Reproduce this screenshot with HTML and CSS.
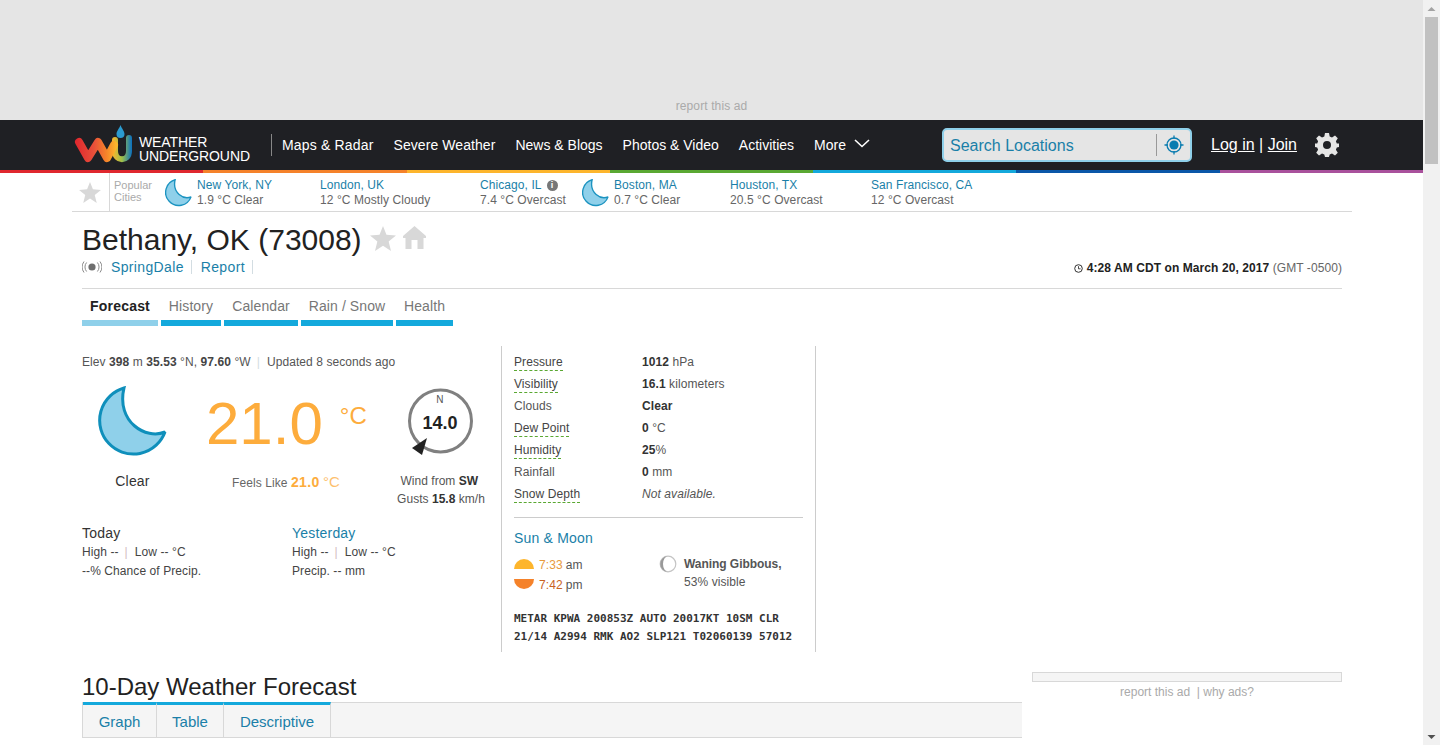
FILE: index.html
```html
<!DOCTYPE html>
<html lang="en">
<head>
    <meta charset="UTF-8">
    <title>Bethany, OK (73008) Forecast</title>
    <link rel="stylesheet" href="styles.css">
</head>
<body>
<div class="page">

    <!-- top ad -->
    <div class="top-ad"><span>report this ad</span></div>

    <!-- header -->
    <header class="site-header">
        <a class="logo">
            <svg width="60" height="44" viewBox="0 0 60 44">
                <defs>
                    <linearGradient id="wGrad" gradientUnits="userSpaceOnUse" x1="2" y1="0" x2="42" y2="0">
                        <stop offset="0" stop-color="#e0282e"/>
                        <stop offset="0.45" stop-color="#e8503a"/>
                        <stop offset="0.75" stop-color="#f5822a"/>
                        <stop offset="1" stop-color="#fdb52c"/>
                    </linearGradient>
                    <linearGradient id="uGrad" gradientUnits="userSpaceOnUse" x1="38" y1="0" x2="58" y2="0">
                        <stop offset="0" stop-color="#fdb52c"/>
                        <stop offset="0.5" stop-color="#9ec04a"/>
                        <stop offset="1" stop-color="#0a70c0"/>
                    </linearGradient>
                </defs>
                <path d="M41 17 V28 C41 39 55 39 55 28 V15" fill="none" stroke="url(#uGrad)" stroke-width="6" stroke-linecap="round"/>
                <path d="M5 19 L14 35 L24 19 L33 35 L40 22" fill="none" stroke="url(#wGrad)" stroke-width="8" stroke-linecap="round" stroke-linejoin="round"/>
                <path d="M46.5 2 C48 6 50.5 8 50.5 11 A4 4 0 0 1 42.5 11 C42.5 8 45 6 46.5 2 Z" fill="#2b9bd0"/>
            </svg>
            <span class="logo-text">WEATHER<br>UNDERGROUND</span>
        </a>
        <nav class="main-nav">
            <a class="maps">Maps &amp; Radar</a>
            <a class="severe">Severe Weather</a>
            <a>News &amp; Blogs</a>
            <a>Photos &amp; Video</a>
            <a>Activities</a>
            <a class="more">More
                <svg width="16" height="9" viewBox="0 0 16 9"><path d="M1 1 L8 7.5 L15 1" fill="none" stroke="#fff" stroke-width="1.6"/></svg>
            </a>
        </nav>
        <div class="search">
            <span class="search-text">Search Locations</span>
            <span class="search-btn">
                <svg width="20" height="20" viewBox="0 0 20 20">
                    <circle cx="10" cy="10" r="7" fill="none" stroke="#0a7cb0" stroke-width="1.3"/>
                    <circle cx="10" cy="10" r="4.6" fill="#0a7cb0"/>
                    <path d="M10 0.5 V4 M10 16 V19.5 M0.5 10 H4 M16 10 H19.5" stroke="#0a7cb0" stroke-width="1.3"/>
                </svg>
            </span>
        </div>
        <div class="login"><a>Log in</a> | <a>Join</a></div>
        <svg class="gear" width="24" height="24" viewBox="0 0 24 24">
            <path fill="#e5e5e5" fill-rule="evenodd" d="M10 0 H14 L14.7 3.4 L17 4.4 L20 2.5 L22.8 5.3 L20.9 8.2 L21.8 10.4 L24 10.5 V14 L21.8 14.6 L20.9 16.8 L22.8 19.7 L20 22.5 L17 20.6 L14.7 21.6 L14 24 H10 L9.3 21.6 L7 20.6 L4 22.5 L1.2 19.7 L3.1 16.8 L2.2 14.6 L0 14 V10.5 L2.2 10.4 L3.1 8.2 L1.2 5.3 L4 2.5 L7 4.4 L9.3 3.4 Z M12 8 A4 4 0 1 0 12 16 A4 4 0 1 0 12 8 Z"/>
        </svg>
    </header>
    <div class="rainbow">
        <i class="c1"></i><i class="c2"></i><i class="c3"></i><i class="c4"></i><i class="c5"></i><i class="c6"></i><i class="c7"></i>
    </div>

    <!-- popular cities -->
    <div class="cities">
        <div class="cities-star">
            <svg width="22" height="21" viewBox="0 0 24 23"><path d="M12 0 L15.2 8 L24 8.7 L17.2 14.3 L19.4 23 L12 18.2 L4.6 23 L6.8 14.3 L0 8.7 L8.8 8 Z" fill="#d8d8d8"/></svg>
        </div>
        <div class="cities-label">Popular<br>Cities</div>
        <div class="city w-ny">
            <svg class="city-moon" width="28" height="28" viewBox="0 0 72 72"><path d="M26 2 A33.7 33.7 0 1 0 67 46 C48 54 18 36 26 2 Z" fill="#8fd0ea" stroke="#1b93c0" stroke-width="3.5" stroke-miterlimit="2"/></svg>
            <div><a>New York, NY</a><p>1.9 °C Clear</p></div>
        </div>
        <div class="city w-london"><div><a>London, UK</a><p>12 °C Mostly Cloudy</p></div></div>
        <div class="city w-chicago"><div><a>Chicago, IL</a> <span class="info">i</span><p>7.4 °C Overcast</p></div></div>
        <div class="city w-boston">
            <svg class="city-moon" width="28" height="28" viewBox="0 0 72 72"><path d="M26 2 A33.7 33.7 0 1 0 67 46 C48 54 18 36 26 2 Z" fill="#8fd0ea" stroke="#1b93c0" stroke-width="3.5" stroke-miterlimit="2"/></svg>
            <div><a>Boston, MA</a><p>0.7 °C Clear</p></div>
        </div>
        <div class="city w-houston"><div><a>Houston, TX</a><p>20.5 °C Overcast</p></div></div>
        <div class="city"><div><a>San Francisco, CA</a><p>12 °C Overcast</p></div></div>
    </div>

    <main class="content">
        <div class="title-row">
            <h1>Bethany, OK (73008)</h1>
            <svg width="26" height="25" viewBox="0 0 24 23"><path d="M12 0 L15.2 8 L24 8.7 L17.2 14.3 L19.4 23 L12 18.2 L4.6 23 L6.8 14.3 L0 8.7 L8.8 8 Z" fill="#d8d8d8"/></svg>
            <svg width="23" height="23" viewBox="0 0 23 23"><path d="M11.5 0 L23 10 V12 H20.5 V23 H14.5 V14 H8.5 V23 H2.5 V12 H0 V10 Z" fill="#d8d8d8"/></svg>
        </div>
        <div class="station-row">
            <div class="station">
                <svg width="20" height="12" viewBox="0 0 20 12">
                    <circle cx="10" cy="6" r="3.6" fill="#6e6e6e"/>
                    <path d="M4.6 1.5 A7 7 0 0 0 4.6 10.5 M15.4 1.5 A7 7 0 0 1 15.4 10.5 M2 0.5 A9.5 9.5 0 0 0 2 11.5 M18 0.5 A9.5 9.5 0 0 1 18 11.5" fill="none" stroke="#8a8a8a" stroke-width="1"/>
                </svg>
                <a>SpringDale</a><span class="pipe"></span><a>Report</a><span class="pipe"></span>
            </div>
            <div class="local-time">
                <svg width="9" height="9" viewBox="0 0 9 9"><circle cx="4.5" cy="4.5" r="3.8" fill="none" stroke="#333" stroke-width="1"/><path d="M4.5 2.2 V4.8 H6.6" fill="none" stroke="#333" stroke-width="0.9"/></svg>
                <b>4:28 AM CDT on March 20, 2017</b> <span>(GMT -0500)</span>
            </div>
        </div>

        <ul class="tabs">
            <li class="on t1">Forecast</li>
            <li class="t2">History</li>
            <li class="t3">Calendar</li>
            <li class="t4">Rain / Snow</li>
            <li class="t5">Health</li>
        </ul>

        <div class="conditions">
            <section class="now">
                <div class="elev">Elev <b>398</b> m <b>35.53</b> °N, <b>97.60</b> °W<span class="bar">|</span>Updated 8 seconds ago</div>
                <div class="now-main">
                    <div class="now-icon">
                        <svg width="72" height="72" viewBox="0 0 72 72"><path d="M26 2 A33.7 33.7 0 1 0 67 46 C48 54 18 36 26 2 Z" fill="#8fd0ea" stroke="#0f8fbb" stroke-width="3" stroke-miterlimit="2"/></svg>
                        <div class="now-cond">Clear</div>
                    </div>
                    <div class="now-temp">
                        <div class="temp"><span class="temp-num">21.0</span><span class="temp-unit">°C</span></div>
                        <div class="feels">Feels Like <b>21.0</b> <span>°C</span></div>
                    </div>
                    <div class="now-wind">
                        <div class="compass">
                            <svg class="compass-ring" width="76" height="76" viewBox="0 0 76 76">
                                <circle cx="36.5" cy="35" r="31" fill="none" stroke="#808080" stroke-width="3"/>
                                <path d="M8 62 L23 52 L18 69 Z" fill="#222"/>
                            </svg>
                            <span class="compass-n">N</span>
                            <span class="compass-speed">14.0</span>
                        </div>
                        <div class="wind-text">Wind from <b>SW</b>&nbsp;<br>Gusts <b>15.8</b> km/h</div>
                    </div>
                </div>
                <div class="history">
                    <div class="hist-col">
                        <h3>Today</h3>
                        <p>High --<span class="sep">|</span>Low -- °C</p>
                        <p>--% Chance of Precip.</p>
                    </div>
                    <div class="hist-col">
                        <h3 class="link">Yesterday</h3>
                        <p>High --<span class="sep">|</span>Low -- °C</p>
                        <p>Precip. -- mm</p>
                    </div>
                </div>
            </section>

            <section class="details">
                <div class="row"><span class="key"><u>Pressure</u></span><span><b>1012</b> hPa</span></div>
                <div class="row"><span class="key"><u>Visibility</u></span><span><b>16.1</b> kilometers</span></div>
                <div class="row"><span class="key">Clouds</span><span><b>Clear</b></span></div>
                <div class="row"><span class="key"><u>Dew Point</u></span><span><b>0</b> °C</span></div>
                <div class="row"><span class="key"><u>Humidity</u></span><span><b>25</b>%</span></div>
                <div class="row"><span class="key">Rainfall</span><span><b>0</b> mm</span></div>
                <div class="row"><span class="key"><u>Snow Depth</u></span><span><em>Not available.</em></span></div>
                <hr>
                <h3 class="link">Sun &amp; Moon</h3>
                <div class="astro">
                    <div class="sun">
                        <div class="sun-row"><i class="sun-up"></i><span class="rise">7:33</span> am</div>
                        <div class="sun-row"><i class="sun-down"></i><span class="set">7:42</span> pm</div>
                    </div>
                    <div class="moon">
                        <svg width="18" height="18" viewBox="0 0 18 18"><circle cx="9" cy="9" r="7.8" fill="#fff" stroke="#c4c4c4" stroke-width="1.2"/><path d="M9 1.2 A7.8 7.8 0 0 0 9 16.8 A5 7.8 0 0 1 9 1.2 Z" fill="#999"/></svg>
                        <div><b>Waning Gibbous,</b><br>53% visible</div>
                    </div>
                </div>
                <div class="metar">METAR KPWA 200853Z AUTO 20017KT 10SM CLR<br>21/14 A2994 RMK AO2 SLP121 T02060139 57012</div>
            </section>
        </div>

        <div class="lower">
            <div class="forecast">
                <h2>10-Day Weather Forecast</h2>
                <div class="fc-tabs">
                    <a class="g">Graph</a><a class="t">Table</a><a class="d">Descriptive</a>
                </div>
            </div>
            <aside class="side-ad">
                <div class="side-ad-box"></div>
                <div class="side-ad-text">report this ad&nbsp; | why ads?</div>
            </aside>
        </div>
    </main>
</div>

<!-- scrollbar -->
<div class="scrollbar">
    <svg class="arrow" width="17" height="17" viewBox="0 0 17 17"><path d="M4.5 11 L8.5 7 L12.5 11 Z" fill="#a3a3a3"/></svg>
    <div class="thumb"></div>
    <svg class="arrow bottom" width="17" height="17" viewBox="0 0 17 17"><path d="M4.5 7 L8.5 11 L12.5 7 Z" fill="#505050"/></svg>
</div>
</body>
</html>
```

FILE: styles.css
```css
html, body { margin: 0; padding: 0; height: 745px; overflow: hidden; }
body { display: flex; font-family: "Liberation Sans", Arial, sans-serif; font-size: 12px; letter-spacing: 0.08px; color: #333; background: #fff; }
a { color: #1a7fa8; text-decoration: none; }
p, h1, h2, h3, ul { margin: 0; padding: 0; }

.page { width: 1423px; height: 745px; overflow: hidden; flex: none; }

/* scrollbar */
.scrollbar { width: 17px; height: 745px; background: #f1f1f1; display: flex; flex-direction: column; }
.scrollbar .arrow { flex: none; }
.thumb { height: 147px; background: #c1c1c1; margin-left: 2px; width: 13px; flex: none; }
.scrollbar .bottom { margin-top: auto; }

/* top ad */
.top-ad { height: 120px; background: #e5e5e5; display: flex; align-items: flex-end; justify-content: center; }
.top-ad span { color: #aaa; font-size: 12px; line-height: 14px; margin-bottom: 7px; letter-spacing: 0.12px; }

/* header */
.site-header { height: 50px; background: #1f2024; display: flex; align-items: center; padding-left: 74px; color: #fff; }
.logo { display: flex; align-items: center; width: 197px; height: 50px; }
.logo svg { flex: none; }
.logo-text { color: #fff; font-size: 14px; line-height: 14px; margin-left: 5px; margin-top: 8px; letter-spacing: -0.1px; }
.main-nav { display: flex; align-items: center; gap: 20px; border-left: 1px solid #888; height: 22px; padding-left: 10px; width: 671px; box-sizing: border-box; flex: none; }
.main-nav a { color: #fff; font-size: 14px; white-space: nowrap; letter-spacing: 0; }
.main-nav .maps { letter-spacing: 0.17px; }
.main-nav .severe { letter-spacing: 0.07px; }
.more svg { margin-left: 4px; vertical-align: 2px; }
.search { width: 250px; height: 34px; box-sizing: border-box; background: #e5e5e5; border: 2px solid #8fd0ea; border-radius: 5px; display: flex; align-items: center; justify-content: space-between; padding-left: 6px; flex: none; }
.search-text { color: #1a7fa8; font-size: 16px; letter-spacing: 0; padding-top: 1px; }
.search-btn { border-left: 1px solid #999; height: 22px; width: 33px; display: flex; align-items: center; justify-content: center; }
.login { margin-left: 19px; font-size: 16px; color: #fff; white-space: nowrap; letter-spacing: 0; }
.login a { color: #fff; text-decoration: underline; }
.gear { margin-left: 18px; }

.rainbow { display: flex; height: 3px; }
.rainbow i { flex: 1; }
.c1 { background: #e0282e; }
.c2 { background: #f5822a; }
.c3 { background: #fdb52c; }
.c4 { background: #5aa832; }
.c5 { background: #14a9dc; }
.c6 { background: #0a57a8; }
.c7 { background: #a9519c; }

/* popular cities */
.cities { margin: 0 71px 0 72px; height: 38px; border-bottom: 1px solid #d8d8d8; display: flex; align-items: center; }
.cities-star { width: 38px; height: 38px; border-right: 1px solid #d8d8d8; display: flex; align-items: center; justify-content: center; box-sizing: border-box; flex: none; padding-right: 1px; }
.cities-label { width: 55px; padding-left: 4px; box-sizing: border-box; font-size: 11px; line-height: 12px; color: #aaa; margin-top: -2px; flex: none; letter-spacing: 0; }
.city { display: flex; align-items: center; font-size: 12px; line-height: 15px; color: #666; white-space: nowrap; padding-top: 1px; flex: none; }
.city-moon { margin-right: 4px; flex: none; }
.city a { color: #1a7fa8; }
.w-ny { width: 155px; }
.w-london { width: 160px; }
.w-chicago { width: 102px; }
.w-boston { width: 148px; }
.w-houston { width: 141px; }
.info { display: inline-block; width: 11px; height: 11px; border-radius: 50%; background: #777; color: #fff; font-size: 9px; line-height: 11px; text-align: center; font-weight: 700; margin-left: 2px; vertical-align: 1px; letter-spacing: 0; }

/* main */
.content { padding: 0 81px 0 82px; }
.title-row { display: flex; align-items: center; height: 37px; padding-top: 9px; gap: 8px; }
.title-row h1 { font-size: 30px; font-weight: 400; color: #222; line-height: 37px; letter-spacing: 0; }
.title-row svg { margin-top: -3px; }
.title-row svg + svg { margin-left: -1px; margin-top: -5px; }
.station-row { display: flex; justify-content: space-between; align-items: flex-end; height: 31px; box-sizing: border-box; padding-bottom: 13px; border-bottom: 1px solid #d8d8d8; }
.station { display: flex; align-items: center; font-size: 14px; line-height: 16px; letter-spacing: 0.35px; }
.station svg { margin-right: 9px; }
.pipe { width: 1px; height: 14px; background: #d3dde2; margin: 0 9px 0 7px; }
.local-time { font-size: 12px; line-height: 13px; color: #222; }
.local-time span { color: #666; }
.local-time svg { vertical-align: -1px; }

.tabs { list-style: none; display: flex; gap: 3px; margin-top: 8px; }
.tabs li { height: 23px; border-bottom: 6px solid #14a9dc; font-size: 14px; line-height: 18px; color: #777; text-align: center; box-sizing: content-box; letter-spacing: 0.1px; }
.tabs .on { border-bottom-color: #8fd0ea; color: #222; font-weight: 700; letter-spacing: 0.2px; }
.t1 { width: 76px; }
.t2 { width: 60px; }
.t3 { width: 74px; }
.t4 { width: 92px; }
.t5 { width: 57px; }

.conditions { display: flex; margin-top: 20px; height: 306px; }
.now { width: 419px; border-right: 1px solid #ccc; box-sizing: content-box; flex: none; }
.elev { padding-top: 9px; line-height: 14px; color: #555; }
.elev b { color: #444; }
.bar { color: #d3dde2; margin: 0 7px 0 6px; }
.now-main { display: flex; margin-top: 17px; height: 130px; }
.now-icon { width: 100px; text-align: center; flex: none; }
.now-icon svg { display: block; margin-left: 16px; }
.now-cond { font-size: 14px; color: #333; margin-top: 14px; line-height: 18px; letter-spacing: 0.2px; margin-left: 1px; }
.now-temp { margin-left: 24px; width: 177px; flex: none; letter-spacing: 0; }
.temp { height: 78px; white-space: nowrap; }
.temp-num { font-size: 60px; color: #fdac3c; line-height: 76px; }
.temp-unit { font-size: 24px; color: #fdac3c; vertical-align: 20px; margin-left: 17px; line-height: 0; }
.feels { margin-top: 9px; line-height: 18px; color: #666; white-space: nowrap; padding-left: 26px; letter-spacing: 0.08px; }
.feels b { color: #fdac3c; font-size: 14px; letter-spacing: 0.35px; }
.feels span { color: #fdac3c; font-size: 15px; opacity: .75; }
.now-wind { flex: 1; }
.compass { position: relative; width: 76px; height: 76px; margin-left: 21px; }
.compass-ring { display: block; overflow: visible; }
.compass-n { position: absolute; left: 31px; top: 8px; width: 10px; text-align: center; font-size: 10px; color: #555; line-height: 12px; }
.compass-speed { position: absolute; left: 6px; top: 27px; width: 60px; text-align: center; font-size: 18px; font-weight: 700; color: #222; line-height: 20px; letter-spacing: 0; }
.wind-text { text-align: center; line-height: 18px; color: #555; margin-top: 10px; width: 116px; white-space: nowrap; letter-spacing: 0.03px; }
.wind-text b { color: #333; }

.history { display: flex; margin-top: 8px; }
.hist-col { width: 210px; flex: none; }
.hist-col h3 { font-size: 14px; font-weight: 400; color: #333; line-height: 18px; margin-bottom: 1px; letter-spacing: 0.2px; }
h3.link, .hist-col h3.link { color: #1a7fa8; }
.hist-col p { line-height: 19px; color: #444; }
.sep { color: #d3bcc0; margin: 0 7px 0 6px; }

.details { width: 289px; padding: 5px 12px 0 12px; border-right: 1px solid #ccc; box-sizing: content-box; flex: none; }
.row { display: flex; height: 22px; line-height: 22px; color: #555; }
.row b { color: #333; }
.key { width: 128px; flex: none; }
.key u { text-decoration: none; border-bottom: 1px dashed #5aa832; color: #444; padding-bottom: 1px; }
.details hr { border: 0; border-top: 1px solid #ccc; margin: 12px 0 11px 0; }
.details h3 { font-size: 14px; font-weight: 400; line-height: 18px; letter-spacing: 0.2px; }
.astro { display: flex; margin-top: 8px; }
.sun { width: 146px; line-height: 20px; color: #555; flex: none; }
.sun-row { display: flex; align-items: center; gap: 5px; height: 20px; }
.rise { color: #e89a3c; margin-right: -2px; }
.set { color: #c9621f; margin-right: -2px; }
.sun-up { width: 20px; height: 10px; background: #fdb52c; border-radius: 10px 10px 0 0; margin-bottom: 3px; }
.sun-down { width: 20px; height: 10px; background: #f5822a; border-radius: 0 0 10px 10px; margin-bottom: 3px; }
.moon { display: flex; line-height: 18px; gap: 7px; color: #555; }
.moon b { letter-spacing: -0.05px; color: #555; }
.moon svg { margin-left: -1px; }
.metar { font-family: "DejaVu Sans Mono", "Liberation Mono", monospace; font-size: 11px; font-weight: 700; line-height: 18px; color: #333; margin-top: 15px; white-space: nowrap; letter-spacing: 0; }

.lower { display: flex; margin-top: 20px; }
.forecast { width: 940px; flex: none; }
.forecast h2 { font-size: 24px; font-weight: 400; color: #222; line-height: 30px; letter-spacing: 0; }
.fc-tabs { display: flex; height: 36px; box-sizing: border-box; background: #f5f5f5; border: 1px solid #d8d8d8; border-right: 0; }
.fc-tabs a { font-size: 15px; text-align: center; border-top: 3px solid #14a9dc; margin-top: -1px; border-right: 1px solid #d8d8d8; height: 36px; box-sizing: border-box; line-height: 33px; letter-spacing: 0; }
.fc-tabs .g { width: 74px; }
.fc-tabs .t { width: 67px; }
.fc-tabs .d { width: 107px; }
.side-ad { margin-left: 10px; width: 310px; flex: none; }
.side-ad-box { height: 8px; border: 1px solid #d8d8d8; background: #f5f5f5; width: 308px; }
.side-ad-text { text-align: center; color: #aaa; font-size: 12px; line-height: 14px; margin-top: 3px; letter-spacing: 0; }
```
